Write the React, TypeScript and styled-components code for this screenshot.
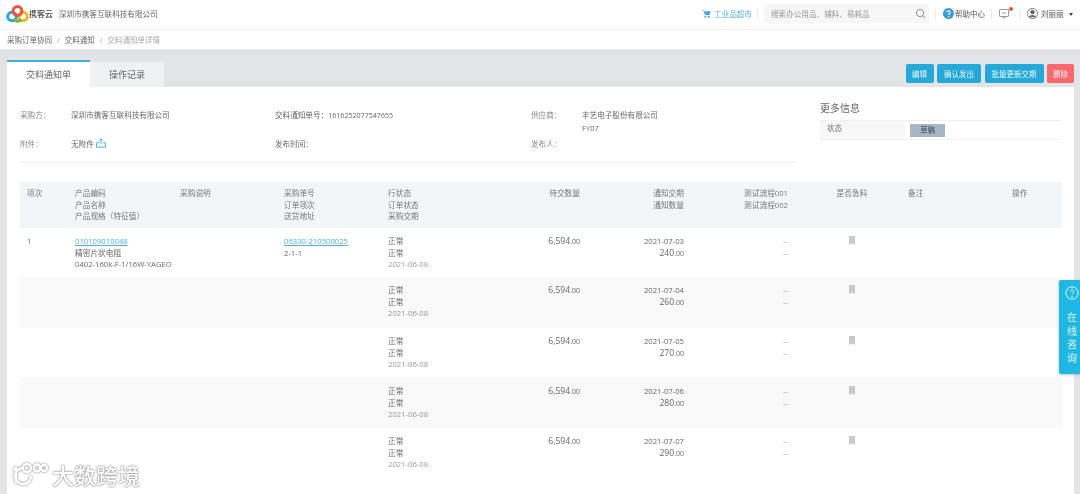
import React from "react";
import styled, { createGlobalStyle } from "styled-components";

const Global = createGlobalStyle`
  html, body { margin: 0; padding: 0; background: #fff; }
  body { width: 1080px; height: 494px; overflow: hidden; font-family: "Open Sans", "Noto Sans CJK SC", sans-serif; color: #666; }
  * { box-sizing: border-box; }
`;
const Page = styled.div`
  position: relative; width: 1080px; height: 494px; overflow: hidden; filter: blur(0.6px);
`;
const Header = styled.header`
  height: 30px; display: flex; align-items: center; background: #fff; border-bottom: 1px solid #eef1f5; padding: 0 0 2px 6px;
`;
const Brand = styled.div`display: flex; align-items: center; width: 696px; flex: none;`;
const BrandName = styled.span`font-size: 8px; font-weight: 500; color: #444; width: 30px; white-space: nowrap; padding-bottom: 1px;`;
const Company = styled.span`font-size: 7.6px; color: #666;`;
const Market = styled.a`
  display: flex; align-items: center; gap: 3px; font-size: 7.6px; color: #55aee0; width: 55px; flex: none; white-space: nowrap;
`;
const Divider = styled.i`width: 1px; height: 10px; background: #e8e8e8; display: block; flex: none;`;
const Search = styled.div`
  width: 165px; height: 19px; flex: none; background: #f7f7f7; margin: 0 6px 0 6px; display: flex; align-items: center; justify-content: space-between; padding: 0 3px 0 7px; font-size: 7.6px; color: #999;
`;
const Help = styled.span`display: flex; align-items: center; gap: 1px; font-size: 7.5px; color: #555; margin: 0 6px 0 7px; white-space: nowrap; flex: none;`;
const Msg = styled.span`position: relative; display: flex; margin: 0 11px 0 7px; flex: none;`;
const Dot = styled.b`position: absolute; width: 4px; height: 4px; border-radius: 50%; background: #f04b3c; right: -4px; top: -2px;`;
const User = styled.span`display: flex; align-items: center; gap: 3px; font-size: 7.5px; color: #555; margin-left: 6px; white-space: nowrap; flex: none;`;
const Caret = styled.b`width: 0; height: 0; border: 2.5px solid transparent; border-top: 3px solid #444; margin: 3px 0 0 2px;`;
const Crumbs = styled.nav`
  height: 19px; background: #fff; display: flex; align-items: center; gap: 4px; padding: 0 0 0 7px; font-size: 7.5px; color: #666;
`;
const Sep = styled.span`color: #aaa; margin: 0 1px;`;
const Current = styled.span`color: #aaa;`;
const Work = styled.main`
  height: 445px; background: #e2e4e6; padding: 11px 6px 0 7px;
`;
const TabBar = styled.div`height: 27px; display: flex; justify-content: space-between; align-items: flex-start;`;
const Tabs = styled.div`display: flex;`;
const Tab = styled.div<{ $active?: boolean }>`
  height: ${p => p.$active ? 27 : 25}px; margin-top: ${p => p.$active ? 0 : 2}px; width: ${p => p.$active ? 83 : 74}px;
  background: ${p => p.$active ? "#fff" : "#eff1f2"}; border-top: ${p => p.$active ? "2px solid #3eb2de" : "none"};
  display: flex; align-items: center; justify-content: center; font-size: 9px; color: #666;
`;
const Actions = styled.div`display: flex; gap: 3.5px; margin: 4px 0 0 0; padding-right: 0;`;
const Btn = styled.button<{ $danger?: boolean; $w: number }>`
  width: ${p => p.$w}px; height: 19px; border: 0; border-radius: 2px; padding: 0; background: ${p => p.$danger ? "#f9686c" : "#26a9d9"}; color: #e8f7fc; font: 7.5px "Open Sans", "Noto Sans CJK SC", sans-serif;
`;
const Panel = styled.section`background: #fff; height: 407px; padding: 0 0 0 13px;`;
const Top = styled.div`display: flex; height: 95px;`;
const Info = styled.div`
  width: 776px; height: 76px; border-bottom: 1px solid #eee; display: grid; grid-template-columns: 255px 256px 1fr; grid-template-rows: 29px 29px; padding-top: 22px; font-size: 7.6px; color: #666; align-content: start;
`;
const Field = styled.div`display: flex; align-items: flex-start; line-height: 13px; white-space: nowrap;`;
const Label = styled.span<{ $w?: number }>`color: #888; width: ${p => p.$w ?? 51}px;`;
const Digits = styled.span`font-size: 7.1px;`;
const Stack = styled.div`display: flex; flex-direction: column;`;
const More = styled.aside`width: 241px; margin-left: 24px; padding-top: 14px;`;
const MoreTitle = styled.h3`margin: 0 0 5px; font-size: 10px; font-weight: 400; color: #666; line-height: 14px;`;
const StatusRow = styled.div`
  display: flex; height: 20px; border-top: 1px solid #f0f0f0; border-bottom: 1px solid #f0f0f0; font-size: 7.6px; color: #777;
`;
const StatusKey = styled.div`width: 85px; background: #f8f8f8; padding: 1px 0 0 7px; line-height: 12px;`;
const Badge = styled.span`width: 35px; height: 13px; margin: 3px 0 0 5px; background: #a6b7c3; color: #445; text-align: center; line-height: 13px;`;
const Table = styled.div`width: 1042px;`;
const Row = styled.div<{ $head?: boolean; $alt?: boolean; $h: number }>`
  display: grid; grid-template-columns: 48px 105px repeat(8, 104px) 57px; height: ${p => p.$h}px;
  background: ${p => p.$head ? "#f3f6f9" : p.$alt ? "#f9f9f9" : "#fff"};
  padding-top: ${p => p.$head ? 6 : 8}px; font-size: 7.7px; line-height: 11.5px; color: ${p => p.$head ? "#777" : "#666"};
`;
const Cell = styled.div<{ $align?: string }>`
  display: flex; flex-direction: column; align-items: ${p => p.$align === "right" ? "flex-end" : p.$align === "center" ? "center" : "flex-start"};
  padding: 0 ${p => p.$align === "right" ? 9 : 7}px 0 ${p => p.$align === "center" ? 13 : 7}px; white-space: nowrap;
`;
const Link = styled.a`color: #52add9; text-decoration: underline;`;
const Num = styled.span`font-size: 8.6px; color: #666; small { font-size: 7px; }`;
const Muted = styled.span`color: #999;`;
const Watermark = styled.div`
  position: absolute; left: 9px; bottom: 7px; display: flex; align-items: center; gap: 3px; font-size: 22px; font-weight: 500; line-height: 24px; color: #fff;
  text-shadow: 0 0 2px #777, 0 0 1px #777;
`;
const Consult = styled.div`
  position: absolute; right: 0; top: 280px; width: 21px; height: 94px; background: #1fb7e3; border-radius: 2px 0 0 2px; box-shadow: 0 1px 3px rgba(0,0,0,.25); color: #e8f9fe;
  display: flex; flex-direction: column; align-items: center; padding: 6px 0 0 5px; font-size: 10px; line-height: 13.5px;
`;
const ConsultText = styled.span`margin-top: 11px; width: 10px; text-align: center;`;

const Logo = () => (
  <svg width="23" height="20" viewBox="0 0 23 20" aria-hidden style={{ flex: "none" }}>
    <circle cx="6" cy="12.5" r="4.3" fill="none" stroke="#2ba6dc" strokeWidth="3" />
    <circle cx="17" cy="12.5" r="4.3" fill="none" stroke="#f3b61f" strokeWidth="3" />
    <circle cx="11.5" cy="7" r="4.4" fill="none" stroke="#ee5340" strokeWidth="3" />
    <path d="M8 15.500a4.500 4.500 0 0 0 7 0" fill="none" stroke="#6dbb45" strokeWidth="3" />
  </svg>
);
const Cart = () => (
  <svg width="9" height="9" viewBox="0 0 24 24" fill="#48a8dc"><path d="M1 3h4l1 3h17l-3 10H8L4.500 5H1zM9 18a2.500 2.500 0 1 0 .01 0zM18 18a2.500 2.500 0 1 0 .01 0z" /></svg>
);
const SearchIcon = () => (
  <svg width="11" height="11" viewBox="0 0 24 24" fill="none" stroke="#888" strokeWidth="2"><circle cx="11" cy="11" r="8" /><path d="M17 17l5 5" /></svg>
);
const HelpIcon = () => (
  <svg width="11" height="11" viewBox="0 0 24 24"><circle cx="12" cy="12" r="12" fill="#3a9ad9" /><path d="M8.500 9.500a3.500 3.500 0 1 1 5.500 2.900c-1.300.9-2 1.500-2 3" fill="none" stroke="#fff" strokeWidth="2.600" /><circle cx="12" cy="19" r="1.600" fill="#fff" /></svg>
);
const MsgIcon = () => (
  <svg width="10" height="10" viewBox="0 0 20 20" fill="none" stroke="#777" strokeWidth="1.500"><rect x="1" y="1" width="18" height="14" rx="1.500" /><path d="M7 15l3 4 3-4M6 8h8" /></svg>
);
const UserIcon = () => (
  <svg width="11" height="11" viewBox="0 0 24 24" fill="none" stroke="#666" strokeWidth="1.800"><circle cx="12" cy="12" r="11" /><circle cx="12" cy="9" r="4" fill="#666" /><path d="M5 20c1-5 13-5 14 0" fill="#666" /></svg>
);
const UploadIcon = () => (
  <svg width="10" height="10" viewBox="0 0 24 24" fill="none" stroke="#4fa8dc" strokeWidth="2.400"><path d="M12 15V2M8 6l4-4 4 4M7 11H2l-1 11h22l-1-11h-5" /></svg>
);
const Flag = () => (
  <svg width="6" height="9" viewBox="0 0 6 9"><path d="M0 0h6v9L3 7.500 0 9z" fill="#c9c9c9" /></svg>
);
const Help2 = () => (
  <svg width="14" height="14" viewBox="0 0 24 24" fill="none" stroke="#e8f9fe" strokeWidth="1.700"><circle cx="12" cy="12" r="10.500" /><path d="M9 9.500a3 3 0 1 1 4.700 2.500c-1.100.8-1.700 1.300-1.700 2.500" /><circle cx="12" cy="18" r=".8" fill="#e8f9fe" /></svg>
);
const K100 = () => (
  <svg width="40" height="25" viewBox="0 0 38 25" fill="none" stroke="#fff" strokeWidth="2.400" style={{ filter: "drop-shadow(0 0 1px #777)" }}>
    <path d="M3 8l3-2v15M21 14a8 8 0 1 1-8-8" />
    <circle cx="17" cy="6" r="4" /><circle cx="27" cy="6" r="3.500" /><circle cx="34" cy="6" r="3" />
  </svg>
);

const rows = [
  { d: "2021-07-03", q: "240", h: 49 },
  { d: "2021-07-04", q: "260", h: 51 },
  { d: "2021-07-05", q: "270", h: 50 },
  { d: "2021-07-06", q: "280", h: 50 },
  { d: "2021-07-07", q: "290", h: 50 },
];

export default function App() {
  return (
    <Page>
      <Global />
      <Header>
        <Brand>
          <Logo />
          <BrandName>携客云</BrandName>
          <Company>深圳市携客互联科技有限公司</Company>
        </Brand>
        <Market><Cart />工业品超市</Market>
        <Divider />
        <Search>搜索办公用品、辅料、易耗品<SearchIcon /></Search>
        <Divider />
        <Help><HelpIcon />帮助中心</Help>
        <Divider />
        <Msg><MsgIcon /><Dot /></Msg>
        <Divider />
        <User><UserIcon />刘丽丽<Caret /></User>
      </Header>
      <Crumbs>
        <span>采购订单协同</span><Sep>/</Sep><span>交料通知</span><Sep>/</Sep><Current>交料通知单详情</Current>
      </Crumbs>
      <Work>
        <TabBar>
          <Tabs>
            <Tab $active>交料通知单</Tab>
            <Tab>操作记录</Tab>
          </Tabs>
          <Actions>
            <Btn $w={28}>编辑</Btn>
            <Btn $w={44}>确认发出</Btn>
            <Btn $w={59}>批量更新交期</Btn>
            <Btn $w={27} $danger>删除</Btn>
          </Actions>
        </TabBar>
        <Panel>
          <Top>
            <Info>
              <Field><Label>采购方：</Label>深圳市携客互联科技有限公司</Field>
              <Field><Label $w={0} />交料通知单号：<Digits>1616252077547655</Digits></Field>
              <Field><Label>供应商：</Label><Stack><span>丰艺电子股份有限公司</span><span>FY07</span></Stack></Field>
              <Field><Label>附件：</Label>无附件&nbsp;<UploadIcon /></Field>
              <Field><Label $w={0} />发布时间：</Field>
              <Field><Label>发布人：</Label></Field>
            </Info>
            <More>
              <MoreTitle>更多信息</MoreTitle>
              <StatusRow><StatusKey>状态</StatusKey><Badge>草稿</Badge></StatusRow>
            </More>
          </Top>
          <Table>
            <Row $head $h={46}>
              <Cell>项次</Cell>
              <Cell><span>产品编码</span><span>产品名称</span><span>产品规格（特征值）</span></Cell>
              <Cell>采购说明</Cell>
              <Cell><span>采购单号</span><span>订单项次</span><span>送货地址</span></Cell>
              <Cell><span>行状态</span><span>订单状态</span><span>采购交期</span></Cell>
              <Cell $align="right">待交数量</Cell>
              <Cell $align="right"><span>通知交期</span><span>通知数量</span></Cell>
              <Cell $align="right"><span>测试流程001</span><span>测试流程002</span></Cell>
              <Cell $align="center">是否急料</Cell>
              <Cell>备注</Cell>
              <Cell>操作</Cell>
            </Row>
            {rows.map((r, i) => (
              <Row key={r.d} $alt={i % 2 === 1} $h={r.h}>
                <Cell>{i === 0 ? "1" : ""}</Cell>
                <Cell>{i === 0 && <><Link>010109010048</Link><span>精密片状电阻</span><span>0402-160k-F-1/16W-YAGEO</span></>}</Cell>
                <Cell />
                <Cell>{i === 0 && <><Link>06330-210500025</Link><span>2-1-1</span></>}</Cell>
                <Cell><span>正常</span><span>正常</span><Muted>2021-06-08</Muted></Cell>
                <Cell $align="right"><Num>6,594<small>.00</small></Num></Cell>
                <Cell $align="right"><span>{r.d}</span><Num>{r.q}<small>.00</small></Num></Cell>
                <Cell $align="right"><Muted>--</Muted><Muted>--</Muted></Cell>
                <Cell $align="center"><Flag /></Cell>
                <Cell />
                <Cell />
              </Row>
            ))}
          </Table>
        </Panel>
      </Work>
      <Watermark><K100 />大数跨境</Watermark>
      <Consult><Help2 /><ConsultText>在线咨询</ConsultText></Consult>
    </Page>
  );
}
